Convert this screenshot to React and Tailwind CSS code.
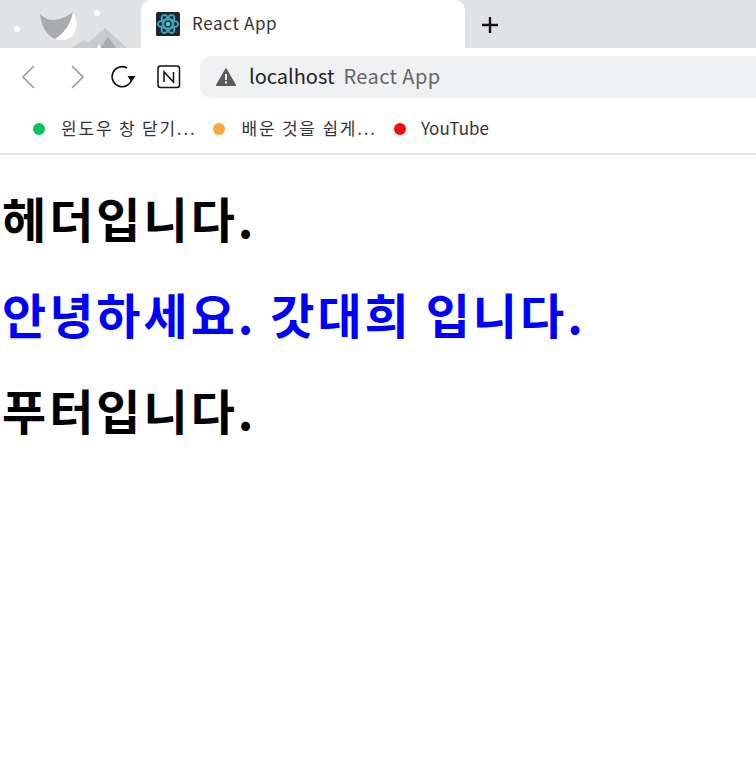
import React from "react";

const korean = "font-['Malgun_Gothic','Noto_Sans_CJK_KR','Noto_Sans',sans-serif]";

const Scenery = () => (
  <svg width="141" height="48" viewBox="0 0 141 48" className="absolute left-0 top-0">
    <circle cx="17" cy="29" r="3" fill="#fff" />
    <circle cx="97" cy="13" r="3" fill="#fff" />
    <path d="M40 14 C45 19 50 20 54 20 C62 19 68 16 73 12 C72 22 66 32 55 39 C47 36 41 26 40 14 Z" fill="#a9abaf" />
    <path d="M55 39 C65 33 71 23 73 12 C78 20 78 32 71 37 C66 41 60 41 55 39 Z" fill="#fff" />
    <path d="M72 48 L84 40 L88 43 L105 28 L127 48 Z" fill="#c9cace" />
    <path d="M100 48 L108 37 L116 48 Z" fill="#a9abaf" />
    <path d="M97 48 L99 44 L101 48 Z" fill="#fff" />
  </svg>
);

const ReactFavicon = () => (
  <svg width="24" height="24" viewBox="0 0 24 24" className="shrink-0">
    <rect width="24" height="24" rx="1.5" fill="#20262b" />
    <g fill="none" stroke="#3f9fb8" strokeWidth="2">
      <ellipse cx="12" cy="12" rx="10" ry="4.5" />
      <ellipse cx="12" cy="12" rx="10" ry="4.5" transform="rotate(60 12 12)" />
      <ellipse cx="12" cy="12" rx="10" ry="4.5" transform="rotate(120 12 12)" />
    </g>
    <circle cx="12" cy="12" r="2.2" fill="#5cc8e4" />
  </svg>
);

const Chevron = ({ d }) => (
  <svg width="18" height="26" viewBox="0 0 18 26" fill="none" stroke="#9a9a9a" strokeWidth="1.6">
    <path d={d} />
  </svg>
);

const Bookmark = ({ color, label, className }) => (
  <div className={`flex items-center ${className}`}>
    <span className={`h-3 w-3 rounded-full ${color}`} />
    <span className="ml-[16px] -translate-y-px text-[17px] leading-6 tracking-[1.8px] text-[#333]">{label}</span>
  </div>
);

export default function App() {
  return (
    <div className={`min-h-[783px] bg-white ${korean}`}>
      {/* browser chrome */}
      <div className="relative flex h-12 bg-[#e1e2e6]">
        <Scenery />
        <div className="relative ml-[141px] flex w-[324px] items-center rounded-t-[10px] bg-white pl-[15px]">
          <ReactFavicon />
          <span className="ml-[12px] -translate-y-px text-[17px] tracking-[0.65px] text-[#333]">React App</span>
        </div>
        <svg width="18" height="18" viewBox="0 0 18 18" className="relative ml-4 mt-4" stroke="#111" strokeWidth="2.4">
          <path d="M9 1v16M1 9h16" />
        </svg>
      </div>

      <div className="relative flex h-[58px] items-center rounded-tl-[14px] bg-white pl-[19px]">
        <Chevron d="M15 2 L4 13 L15 24" />
        <div className="ml-[32px]">
          <Chevron d="M3 2 L14 13 L3 24" />
        </div>
        <svg width="26" height="26" viewBox="0 0 26 26" fill="none" className="ml-[23px]">
          <path d="M17 4 A10 10 0 1 0 22 14" stroke="#111" strokeWidth="1.6" />
          <path d="M17.5 12 H25.5 L21.5 18 Z" fill="#111" />
        </svg>
        <svg width="24" height="24" viewBox="0 0 24 24" fill="none" className="ml-[21px]">
          <rect x="1" y="1" width="21.5" height="21.5" rx="2.5" stroke="#111" strokeWidth="1.5" />
          <path d="M7 17 V7 L16.5 17 V7" stroke="#111" strokeWidth="1.5" />
        </svg>
        <div className="ml-[19px] flex h-[42px] flex-1 items-center rounded-l-[12px] bg-[#eff0f2] pl-[16px]">
          <svg width="20" height="18" viewBox="0 0 20 18">
            <path d="M10 0.5 L19.8 17.5 H0.2 Z" fill="#5b5b5b" stroke="#5b5b5b" strokeLinejoin="round" />
            <path d="M9 6h2v6H9zM9 13.5h2v2H9z" fill="#eff0f2" />
          </svg>
          <span className="ml-[13px] -translate-y-px text-[20px] text-[#222]">localhost</span>
          <span className="ml-[9px] -translate-y-px text-[20px] tracking-[0.4px] text-[#666]">React App</span>
        </div>
      </div>

      <div className="flex h-[49px] items-center border-b-2 border-[#e4e4e4] pb-[2px] pl-[33px]">
        <Bookmark color="bg-[#0cc25c]" label="윈도우 창 닫기..." />
        <Bookmark color="bg-[#f6a53f]" label="배운 것을 쉽게..." className="ml-[17px]" />
        <div className="ml-[17px] flex items-center">
          <span className="h-3 w-3 rounded-full bg-[#fa0a0a]" />
          <span className="ml-[15px] -translate-y-px text-[17px] leading-6 text-[#333]">YouTube</span>
        </div>
      </div>

      {/* page content */}
      <div className="-translate-y-[2px] pl-[2px] font-['Noto_Sans_CJK_KR',sans-serif] text-[48px] font-bold leading-[64px] tracking-[3px]">
        <h1 className="my-8 text-black">헤더입니다.</h1>
        <h1 className="my-8 text-[#0000ff]">안녕하세요. 갓대희 입니다.</h1>
        <h1 className="my-8 text-black">푸터입니다.</h1>
      </div>
    </div>
  );
}
